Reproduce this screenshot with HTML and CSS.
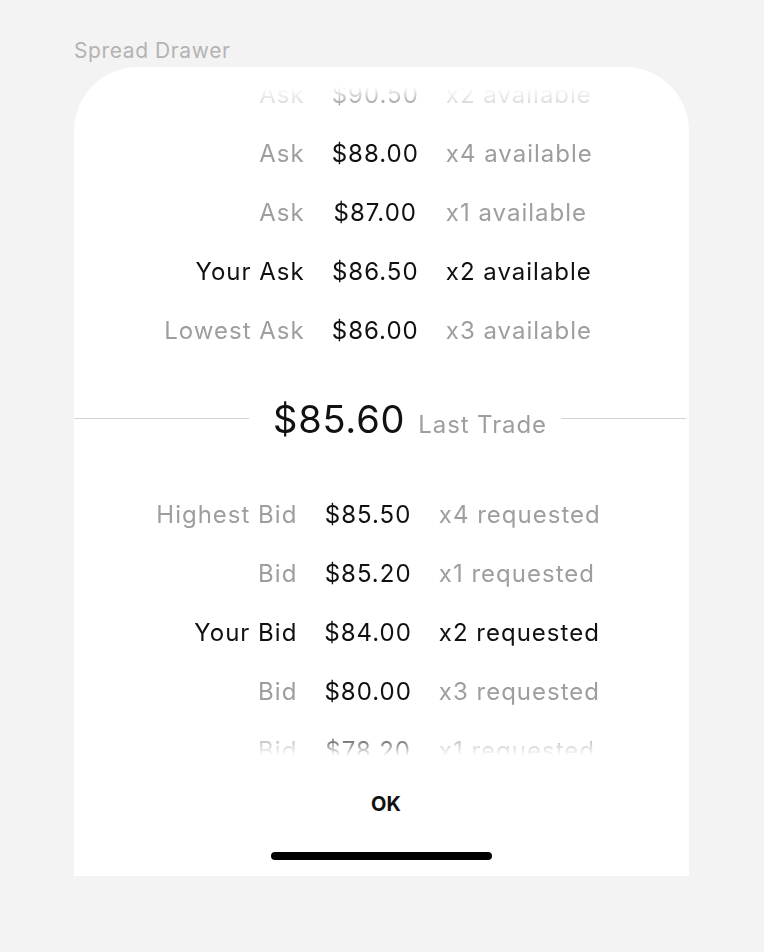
FILE: index.html
```html
<!DOCTYPE html>
<html>
<head>
<meta charset="utf-8">
<link rel="stylesheet" href="styles.css">
</head>
<body>
<div class="page">
  <div class="caption">Spread Drawer</div>
  <div class="drawer">
    <div class="viewport">
      <div class="book">
        <div class="side">
          <span class="lbl">Ask</span><span class="px">$90.50</span><span class="qty">x2 available</span>
          <span class="lbl">Ask</span><span class="px">$88.00</span><span class="qty">x4 available</span>
          <span class="lbl">Ask</span><span class="px">$87.00</span><span class="qty">x1 available</span>
          <span class="lbl mine">Your Ask</span><span class="px">$86.50</span><span class="qty mine">x2 available</span>
          <span class="lbl">Lowest Ask</span><span class="px">$86.00</span><span class="qty">x3 available</span>
        </div>
        <div class="trade">
          <div class="rule rule-left"></div>
          <div class="trade-text"><span class="trade-px">$85.60</span><span class="trade-lbl">Last Trade</span></div>
          <div class="rule rule-right"></div>
        </div>
        <div class="side">
          <span class="lbl">Highest Bid</span><span class="px">$85.50</span><span class="qty">x4 requested</span>
          <span class="lbl">Bid</span><span class="px">$85.20</span><span class="qty">x1 requested</span>
          <span class="lbl mine">Your Bid</span><span class="px">$84.00</span><span class="qty mine">x2 requested</span>
          <span class="lbl">Bid</span><span class="px">$80.00</span><span class="qty">x3 requested</span>
          <span class="lbl">Bid</span><span class="px">$78.20</span><span class="qty">x1 requested</span>
        </div>
      </div>
    </div>
    <div class="ok">OK</div>
    <div class="home-bar"></div>
  </div>
</div>
</body>
</html>
```
FILE: styles.css
```css
* { box-sizing: border-box; }
html, body { margin: 0; padding: 0; }
body {
  background: #f3f3f3;
  font-family: Inter, "Noto Sans", sans-serif;
  width: 764px;
  height: 952px;
  overflow: hidden;
}
.page {
  padding: 38px 75px 0 74px;
}
.caption {
  font-size: 21px;
  letter-spacing: 0.6px;
  color: #b3b3b3;
  line-height: 26px;
  height: 29px;
}
.drawer {
  background: #ffffff;
  width: 615px;
  height: 809px;
  border-radius: 64px 64px 0 0;
  padding-top: 20px;
  display: flex;
  flex-direction: column;
  align-items: stretch;
}
.viewport {
  height: 669px;
  overflow: hidden;
  -webkit-mask-image: linear-gradient(to bottom, transparent 0, #000 44px, #000 calc(100% - 26px), transparent 100%);
  mask-image: linear-gradient(to bottom, transparent 0, #000 44px, #000 calc(100% - 26px), transparent 100%);
}
.book {
  margin-top: -22px;
}
.side {
  display: grid;
  grid-template-columns: auto auto auto;
  grid-auto-rows: 59px;
  column-gap: 27px;
  justify-content: center;
  align-items: center;
  font-size: 24px;
  letter-spacing: 1px;
  padding-right: 6px;
}
.lbl { text-align: right; color: #9e9e9e; }
.px { text-align: center; color: #111111; }
.qty { text-align: left; color: #9e9e9e; }
.mine { color: #111111; }
.trade {
  height: 125px;
  display: flex;
  align-items: center;
  padding-bottom: 8px;
  padding-right: 3px;
}
.rule { height: 1.5px; background: #d4d4d4; }
.rule-left { width: 175px; }
.rule-right { flex: 1; }
.trade-text {
  display: flex;
  align-items: baseline;
  gap: 13px;
  padding: 0 14px 0 24px;
}
.trade-px { font-size: 38px; color: #111; letter-spacing: 0.8px; }
.trade-lbl { font-size: 24px; color: #9e9e9e; letter-spacing: 0.9px; }
.ok {
  text-align: center;
  font-size: 20px;
  font-weight: 700;
  color: #111;
  line-height: 24px;
  margin-top: 36px;
  padding-left: 9px;
}
.home-bar {
  align-self: center;
  width: 221px;
  height: 8px;
  border-radius: 4px;
  background: #000;
  margin-top: 36px;
}
```
